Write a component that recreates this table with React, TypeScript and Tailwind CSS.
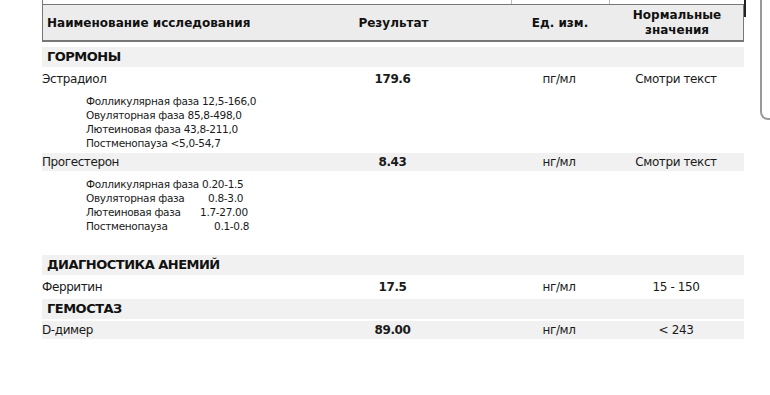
const font = { fontFamily: '"DejaVu Sans", "Liberation Sans", sans-serif' };

const cols = "grid grid-cols-[233px_235px_98px_136px] items-center";

function Section({ title }: { title: string }) {
  return (
    <div className="h-[20px] bg-[#f1f1f1] flex items-center pl-[5px] text-[13px] font-bold tracking-[-0.5px] text-[#111]">
      {title}
    </div>
  );
}

function Row({
  name,
  value,
  unit,
  norm,
  shaded = false,
  tall = false,
}: {
  name: string;
  value: string;
  unit: string;
  norm: string;
  shaded?: boolean;
  tall?: boolean;
}) {
  return (
    <div
      className={`${cols} ${tall ? "h-[20px]" : "h-[18px]"} text-[12px] tracking-[-0.4px] text-[#1a1a1a] ${shaded ? "bg-[#f1f1f1]" : ""}`}
    >
      <div>{name}</div>
      <div className="text-center font-bold">{value}</div>
      <div className="text-center">{unit}</div>
      <div className="text-center">{norm}</div>
    </div>
  );
}

function Notes({ lines }: { lines: [string, string, number][] }) {
  return (
    <div className="pl-[44px] text-[10.5px] leading-[14px] tracking-[-0.3px] text-[#1a1a1a]">
      {lines.map(([label, range, pad]) =>
        range ? (
          <div key={label} className="flex">
            <span className="w-[114px] whitespace-nowrap">{label}</span>
            <span style={{ paddingLeft: pad }}>{range}</span>
          </div>
        ) : (
          <div key={label}>{label}</div>
        ),
      )}
    </div>
  );
}

export default function App() {
  return (
    <div className="relative w-[770px] h-[395px] bg-white overflow-hidden" style={font}>
      {/* page edge on the right */}
      <div className="absolute left-[760px] top-[-10px] w-[20px] h-[130px] border-l-2 border-b-2 border-[#9a9a9a] rounded-bl-[8px]" />
      {/* cut-off row above */}
      <div className="absolute left-[744px] top-0 w-[2px] h-[17px] bg-[#222]" />

      <div className="ml-[42px] w-[702px]">
        <div className={`${cols} h-[4px] border-l border-[#777]`}>
          <div />
          <div />
          <div className="h-full border-l border-[#bbb]" />
          <div className="h-full border-l border-[#bbb]" />
        </div>
        <div className={`${cols} h-[38px] bg-[#ececec] border border-b-2 border-[#777] text-[12px] font-bold text-[#111]`}>
          <div className="pl-[4px]">Наименование исследования</div>
          <div className="text-center">Результат</div>
          <div className="text-center">Ед. изм.</div>
          <div className="text-center leading-[15px]">
            Нормальные
            <br />
            значения
          </div>
        </div>

        <div className="h-[5px]" />
        <Section title="ГОРМОНЫ" />
        <div className="h-[3px]" />
        <Row name="Эстрадиол" value="179.6" unit="пг/мл" norm="Смотри текст" />
        <div className="h-[6px]" />
        <Notes
          lines={[
            ["Фолликулярная фаза 12,5-166,0", "", 0],
            ["Овуляторная фаза 85,8-498,0", "", 0],
            ["Лютеиновая фаза 43,8-211,0", "", 0],
            ["Постменопауза <5,0-54,7", "", 0],
          ]}
        />
        <div className="h-[3px]" />
        <Row name="Прогестерон" value="8.43" unit="нг/мл" norm="Смотри текст" shaded />
        <div className="h-[6px]" />
        <Notes
          lines={[
            ["Фолликулярная фаза", "0.20-1.5", 2],
            ["Овуляторная фаза", "0.8-3.0", 8],
            ["Лютеиновая фаза", "1.7-27.00", 0],
            ["Постменопауза", "0.1-0.8", 14],
          ]}
        />
        <div className="h-[22px]" />
        <Section title="ДИАГНОСТИКА АНЕМИЙ" />
        <div className="h-[2px]" />
        <Row name="Ферритин" value="17.5" unit="нг/мл" norm="15 - 150" tall />
        <div className="h-[2px]" />
        <Section title="ГЕМОСТАЗ" />
        <div className="h-[2px]" />
        <Row name="D-димер" value="89.00" unit="нг/мл" norm="< 243" shaded />
      </div>
    </div>
  );
}
